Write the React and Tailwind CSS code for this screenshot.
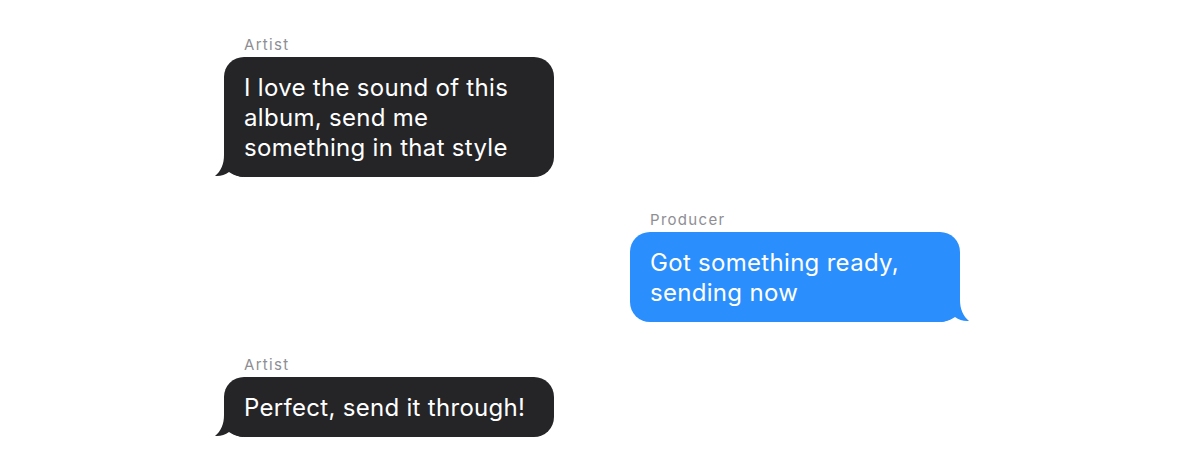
const messages = [
  { from: "Artist", side: "left", text: "I love the sound of this album, send me something in that style" },
  { from: "Producer", side: "right", text: "Got something ready, sending now" },
  { from: "Artist", side: "left", text: "Perfect, send it through!" },
];

function Tail({ side, color }) {
  return (
    <svg
      width="28"
      height="22"
      viewBox="0 0 28 22"
      className={
        side === "left"
          ? "absolute bottom-0 left-[-9px]"
          : "absolute bottom-0 right-[-9px] -scale-x-100"
      }
    >
      <path d="M9 0 C9 9 6 16 0 21 C5 21.5 10 20 14 17 C17 19 21 21 28 22 L28 0 Z" fill={color} />
    </svg>
  );
}

function Bubble({ from, side, text }) {
  const left = side === "left";
  const color = left ? "#252528" : "#2b8efd";
  return (
    <div className={`flex w-[330px] flex-col ${left ? "self-start" : "self-end"}`}>
      <p className="mb-[2px] pl-5 text-[15px] leading-5 tracking-[1.3px] text-[#8e8e93]">{from}</p>
      <div
        className={`relative rounded-[20px] px-5 pt-[16px] pb-[14px] text-[24px] leading-[30px] tracking-[0.3px] text-white ${
          left ? "bg-[#252528]" : "bg-[#2b8efd]"
        }`}
      >
        <Tail side={side} color={color} />
        <span className="relative">{text}</span>
      </div>
    </div>
  );
}

export default function App() {
  return (
    <div className="h-[469px] w-[1180px] bg-white font-['Inter',sans-serif]">
      <div className="ml-[224px] flex w-[736px] flex-col gap-[33px] pt-[35px]">
        {messages.map((m, i) => (
          <Bubble key={i} {...m} />
        ))}
      </div>
    </div>
  );
}
